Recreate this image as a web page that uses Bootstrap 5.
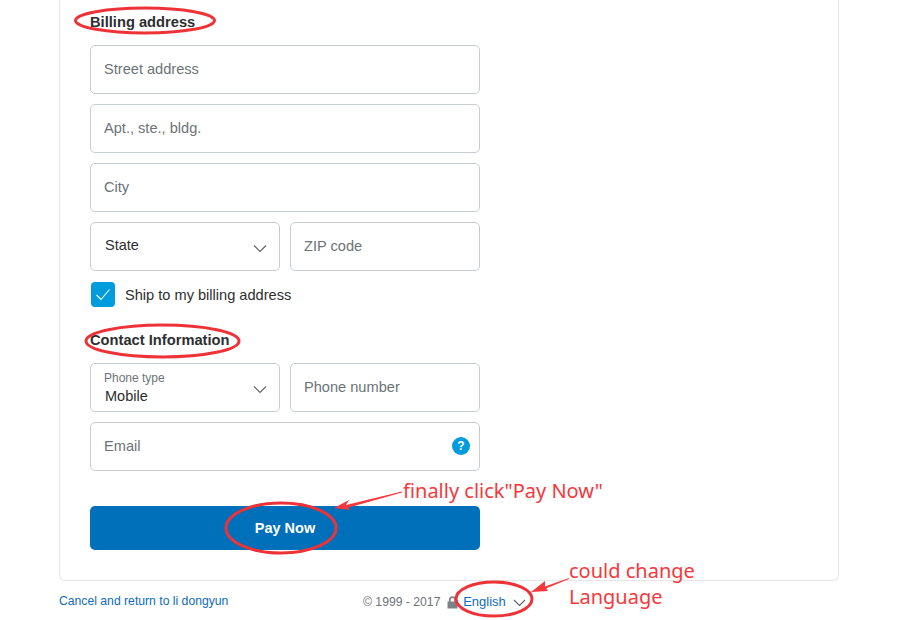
<!DOCTYPE html>
<html lang="en">
<head>
<meta charset="utf-8">
<title>Billing address</title>
<link href="https://cdn.jsdelivr.net/npm/bootstrap@5.3.0/dist/css/bootstrap.min.css" rel="stylesheet">
<style>
html,body{height:620px;overflow:hidden}
body{font-family:"Liberation Sans",Arial,sans-serif;background:#fff;color:#2c2e2f;position:relative}
.page-wrap{width:780px;margin-left:59px}
.pay-card{height:581px;border:1px solid #e6e6e6;border-top:0;border-radius:0 0 6px 6px;padding:0 30px}
.form-col{width:390px}
.sec-title{font-size:14.7px;font-weight:700;line-height:20px;color:#2c2e2f;margin:0}
.sec-billing{padding-top:12px;height:45px}
.sec-contact{padding-top:8px;height:41px;margin-top:15px}
.field{height:49px;border:1px solid #c8cdd1;border-radius:5px;font-size:14.6px;padding:0 13px 2px;color:#2c2e2f;background:#fff;box-shadow:none}
.field::placeholder{color:#6c7378;opacity:1}
.stack{display:flex;flex-direction:column;gap:10px}
.sel-box{height:49px;width:190px;border:1px solid #c8cdd1;border-radius:5px;position:relative;flex:none;font-size:14.5px;color:#2c2e2f}
.sel-state{display:flex;align-items:center;padding:0 14px 1px}
.sel-phone{padding:7px 13px 0}
.sel-label{font-size:12px;line-height:14px;color:#6c7378;display:block}
.sel-val{line-height:17px;display:block;margin-top:3px;padding-left:1px}
.chev{position:absolute;right:12px;top:21px;width:14px;height:9px}
.half{width:190px;flex:none}
.check-row{display:flex;align-items:center;height:26px;margin-top:10px;font-size:14.6px;color:#2c2e2f}
.check-label{padding-top:3px}
.check-tick{width:24px;height:25px;background:#009cde;border-radius:4px;margin:0 10px 0 1px;display:flex;align-items:center;justify-content:center}
.help-dot{position:absolute;right:10px;top:15px;width:18px;height:18px;border-radius:50%;background:#009cde;color:#fff;font-size:12px;font-weight:700;line-height:18px;text-align:center}
.pay-btn{display:block;width:390px;height:44px;margin-top:35px;background:#0070ba;border:0;border-radius:5px;color:#fff;font-size:14.5px;font-weight:700;padding:1px 0 0}
.foot-row{height:39px;position:relative;font-size:12.2px;color:#6c7378}
.foot-link{color:#0f6cbd;text-decoration:none}
.foot-cancel{line-height:41px}
.foot-mid{position:absolute;left:304px;top:0;line-height:41px;white-space:nowrap}
.lock-ico{margin:0 0 0 3px}
.lang-link{color:#0f6cbd;text-decoration:none;font-size:13px;margin-left:2px}
.overlay{position:absolute;left:0;top:0;width:900px;height:620px;pointer-events:none}
.note{position:absolute;font-family:"Noto Sans",sans-serif;font-size:20px;line-height:26px;color:#f6383c;white-space:nowrap}
.note-pay{left:403px;top:478px}
.note-lang{left:569px;top:558px}
</style>
</head>
<body>
<div class="page-wrap">
  <div class="pay-card">
    <div class="form-col">
      <h2 class="sec-title sec-billing">Billing address</h2>
      <div class="stack">
        <input class="form-control field" type="text" placeholder="Street address">
        <input class="form-control field" type="text" placeholder="Apt., ste., bldg.">
        <input class="form-control field" type="text" placeholder="City">
        <div class="d-flex gap-2 justify-content-between">
          <div class="sel-box sel-state">State
            <svg class="chev" viewBox="0 0 14 9"><path d="M1 1.500 7 7.500 13 1.500" fill="none" stroke="#5d6368" stroke-width="1.100"/></svg>
          </div>
          <input class="form-control field half" type="text" placeholder="ZIP code">
        </div>
      </div>
      <div class="check-row">
        <span class="check-tick"><svg width="16" height="13" viewBox="0 0 16 13"><path d="M1.500 7 6 11.500 14.500 1.500" fill="none" stroke="#fff" stroke-width="1.100"/></svg></span>
        <span class="check-label">Ship to my billing address</span>
      </div>
      <h2 class="sec-title sec-contact">Contact Information</h2>
      <div class="stack">
        <div class="d-flex gap-2 justify-content-between">
          <div class="sel-box sel-phone">
            <span class="sel-label">Phone type</span>
            <span class="sel-val">Mobile</span>
            <svg class="chev" viewBox="0 0 14 9"><path d="M1 1.500 7 7.500 13 1.500" fill="none" stroke="#5d6368" stroke-width="1.100"/></svg>
          </div>
          <input class="form-control field half" type="text" placeholder="Phone number">
        </div>
        <div class="position-relative">
          <input class="form-control field" type="text" placeholder="Email">
          <span class="help-dot">?</span>
        </div>
      </div>
      <button class="pay-btn" type="button">Pay Now</button>
    </div>
  </div>
  <div class="foot-row">
    <a class="foot-link foot-cancel" href="#">Cancel and return to li dongyun</a>
    <span class="foot-mid">© 1999 - 2017
      <svg width="11" height="13" viewBox="0 0 11 13" class="lock-ico"><path d="M2.800 6V3.800a2.700 2.700 0 0 1 5.400 0V6" fill="none" stroke="#7b8186" stroke-width="1.800"/><rect x="0.500" y="5.500" width="10" height="7" fill="#7b8186"/></svg>
      <a class="lang-link" href="#">English</a>
      <svg width="13" height="8" viewBox="0 0 13 8" class="ms-1"><path d="M1 1 6.500 6.500 12 1" fill="none" stroke="#5a6065" stroke-width="1.100"/></svg>
    </span>
  </div>
</div>
<svg class="overlay" viewBox="0 0 900 620">
  <g fill="none" stroke="#ee3338" stroke-width="3">
    <ellipse cx="145" cy="20.500" rx="69.500" ry="12.500"/>
    <ellipse cx="162.500" cy="341" rx="76.500" ry="16"/>
    <ellipse cx="281" cy="528" rx="55" ry="25"/>
    <ellipse cx="494" cy="599" rx="38" ry="17"/>
  </g>
  <g fill="#f6383c" stroke="none">
    <path d="M402 491.500 346 505 347 508 402 492.500Z"/>
    <path d="M334 508 349 500 346 505 350 510Z"/>
    <path d="M569 578 545 586.500 546 588.500 569 579Z"/>
    <path d="M531 592 545 581 545 586 548 591Z"/>
  </g>
</svg>
<div class="note note-pay">finally click"Pay Now"</div>
<div class="note note-lang">could change<br>Language</div>
<script src="https://cdn.jsdelivr.net/npm/bootstrap@5.3.0/dist/js/bootstrap.bundle.min.js"></script>
</body>
</html>
